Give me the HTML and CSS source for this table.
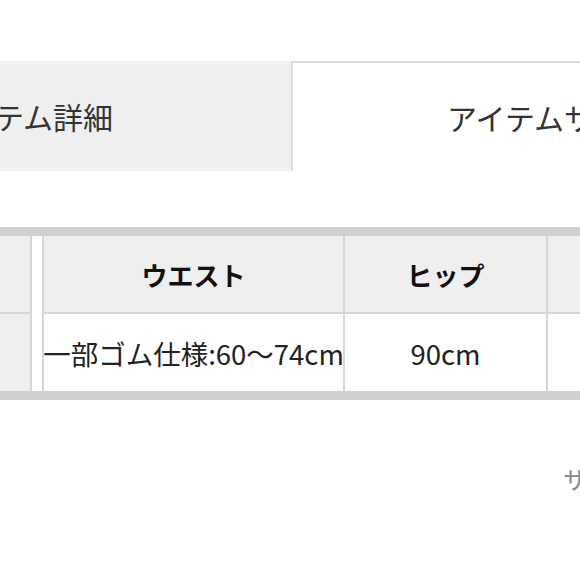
FILE: index.html
```html
<!DOCTYPE html>
<html lang="ja">
<head>
<meta charset="utf-8">
<link rel="stylesheet" href="styles.css">
</head>
<body>
<div class="page">
  <div class="tabs">
    <div class="tab tab-off">アイテム詳細</div>
    <div class="tab tab-on">アイテムサイズ</div>
  </div>
  <div class="size-table">
    <div class="fixed-col">
      <div class="cell head"></div>
      <div class="cell"></div>
    </div>
    <div class="spacer"></div>
    <div class="scroll-grid">
      <div class="cell head">ウエスト</div>
      <div class="cell head">ヒップ</div>
      <div class="cell head"></div>
      <div class="cell body">一部ゴム仕様:60〜74cm</div>
      <div class="cell body">90cm</div>
      <div class="cell body"></div>
    </div>
  </div>
  <div class="note">サイズ表記について</div>
</div>
</body>
</html>
```
FILE: styles.css
```css
html, body {
  margin: 0;
  padding: 0;
  background: #fff;
}
body {
  width: 580px;
  height: 580px;
  overflow: hidden;
  font-family: "Noto Sans CJK JP", "Noto Sans", sans-serif;
  color: #222;
}
.page {
  padding-top: 61px;
}
.tabs {
  display: flex;
  margin-left: -242px;
  height: 110px;
}
.tab {
  flex: 0 0 533px;
  display: flex;
  align-items: center;
  justify-content: center;
  font-size: 30px;
  color: #333;
  box-sizing: border-box;
}
.tab-off {
  background: #efefef;
}
.tab-on {
  background: #fff;
  border-top: 2px solid #dcdcdc;
  border-left: 2px solid #dcdcdc;
  justify-content: flex-start;
  padding-left: 154px;
}
.size-table {
  margin-top: 56px;
  display: flex;
  border-top: 9px solid #d0d0d0;
  border-bottom: 9px solid #d0d0d0;
  width: max-content;
}
.size-table > * {
  flex-shrink: 0;
}
.fixed-col {
  width: 30px;
  display: grid;
  grid-template-rows: 76px 77px;
  row-gap: 2px;
  background: #d6d6d6;
  border-right: 2px solid #d6d6d6;
}
.fixed-col .cell {
  background: #efefef;
}
.spacer {
  width: 10px;
  background: #fff;
}
.scroll-grid {
  display: grid;
  grid-template-columns: 299px 201px 200px;
  grid-template-rows: 76px 77px;
  gap: 2px;
  background: #d6d6d6;
  border-left: 2px solid #d6d6d6;
}
.cell {
  display: flex;
  align-items: center;
  justify-content: center;
  font-size: 26px;
  white-space: nowrap;
}
.head {
  background: #efefef;
  font-weight: 700;
  color: #111;
}
.body {
  background: #fff;
  font-size: 27.5px;
  color: #222;
}
.note {
  margin-top: 61px;
  margin-left: 563px;
  white-space: nowrap;
  font-size: 24px;
  color: #888;
}
```
